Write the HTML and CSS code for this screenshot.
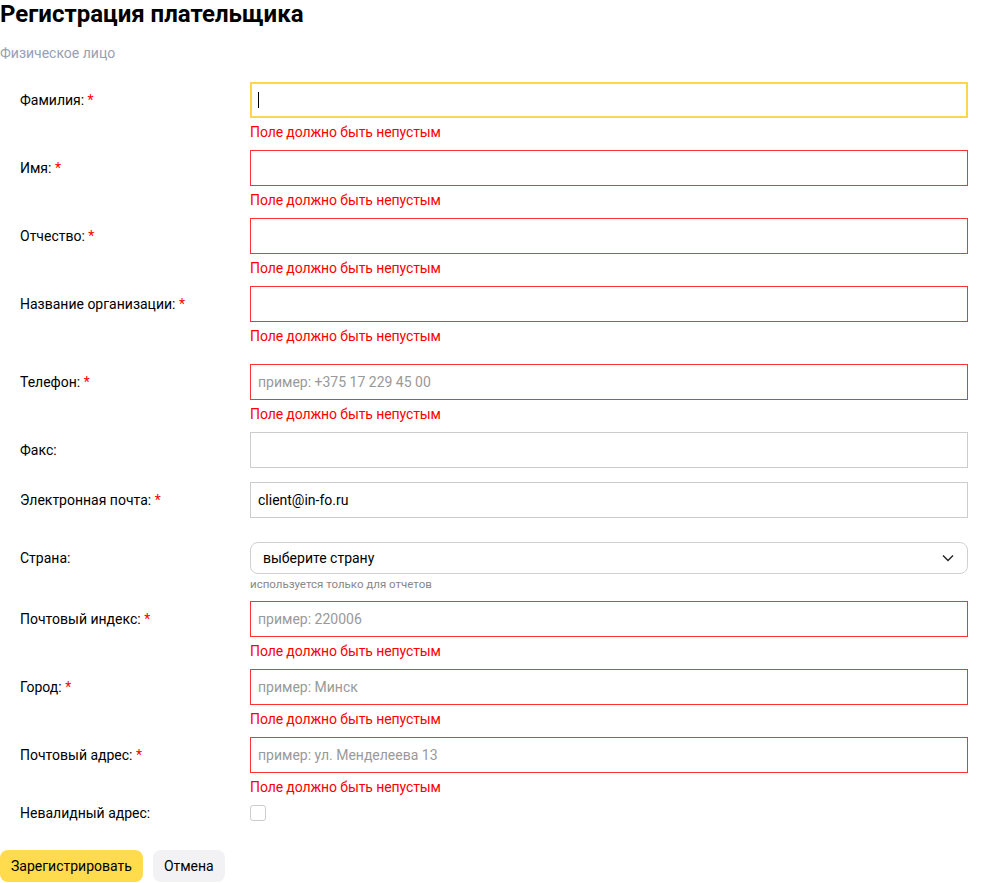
FILE: index.html
```html
<!DOCTYPE html>
<html lang="ru">
<head>
<meta charset="utf-8">
<title>Регистрация плательщика</title>
<link rel="stylesheet" href="styles.css">
</head>
<body>
<div class="page">
  <h1 class="title">Регистрация плательщика</h1>
  <div class="subtitle">Физическое лицо</div>

  <form class="form">
    <div class="row">
      <label class="label">Фамилия: <span class="req">*</span></label>
      <div class="field">
        <div class="input-wrap">
          <input class="input input-focus" type="text">
          <span class="caret"></span>
        </div>
        <div class="error">Поле должно быть непустым</div>
      </div>
    </div>

    <div class="row">
      <label class="label">Имя: <span class="req">*</span></label>
      <div class="field">
        <input class="input input-error" type="text">
        <div class="error">Поле должно быть непустым</div>
      </div>
    </div>

    <div class="row">
      <label class="label">Отчество: <span class="req">*</span></label>
      <div class="field">
        <input class="input input-error" type="text">
        <div class="error">Поле должно быть непустым</div>
      </div>
    </div>

    <div class="row row-wide">
      <label class="label">Название организации: <span class="req">*</span></label>
      <div class="field">
        <input class="input input-error" type="text">
        <div class="error">Поле должно быть непустым</div>
      </div>
    </div>

    <div class="row">
      <label class="label">Телефон: <span class="req">*</span></label>
      <div class="field">
        <input class="input input-error" type="text" placeholder="пример: +375 17 229 45 00">
        <div class="error">Поле должно быть непустым</div>
      </div>
    </div>

    <div class="row row-plain">
      <label class="label">Факс:</label>
      <div class="field">
        <input class="input" type="text">
      </div>
    </div>

    <div class="row row-plain row-before-select">
      <label class="label">Электронная почта: <span class="req">*</span></label>
      <div class="field">
        <input class="input" type="text" value="client@in-fo.ru">
      </div>
    </div>

    <div class="row row-select">
      <label class="label label-select">Страна:</label>
      <div class="field">
        <div class="select">
          <span>выберите страну</span>
          <svg class="chevron" width="12" height="8" viewBox="0 0 12 8"><path d="M1 1.5 L6 6.5 L11 1.5" fill="none" stroke="#222" stroke-width="1.4"/></svg>
        </div>
        <div class="hint">используется только для отчетов</div>
      </div>
    </div>

    <div class="row">
      <label class="label">Почтовый индекс: <span class="req">*</span></label>
      <div class="field">
        <input class="input input-error" type="text" placeholder="пример: 220006">
        <div class="error">Поле должно быть непустым</div>
      </div>
    </div>

    <div class="row">
      <label class="label">Город: <span class="req">*</span></label>
      <div class="field">
        <input class="input input-error" type="text" placeholder="пример: Минск">
        <div class="error">Поле должно быть непустым</div>
      </div>
    </div>

    <div class="row">
      <label class="label">Почтовый адрес: <span class="req">*</span></label>
      <div class="field">
        <input class="input input-error" type="text" placeholder="пример: ул. Менделеева 13">
        <div class="error">Поле должно быть непустым</div>
      </div>
    </div>

    <div class="row row-check">
      <label class="label label-check">Невалидный адрес:</label>
      <div class="field">
        <span class="checkbox"></span>
      </div>
    </div>

    <div class="actions">
      <button type="button" class="btn btn-primary">Зарегистрировать</button>
      <button type="button" class="btn btn-secondary">Отмена</button>
    </div>
  </form>
</div>
</body>
</html>
```

FILE: styles.css
```css
* { box-sizing: border-box; }

body {
  margin: 0;
  font-family: Roboto, "Liberation Sans", sans-serif;
  color: #000;
  background: #fff;
}

.page {
  width: 968px;
}

.title {
  margin: 0;
  font-size: 24px;
  line-height: 28px;
  font-weight: 700;
  color: #000;
}

.subtitle {
  margin-top: 16px;
  font-size: 14px;
  line-height: 18px;
  color: #97a0b4;
}

.form {
  margin-top: 20px;
}

.row {
  display: grid;
  grid-template-columns: 250px 1fr;
  margin-bottom: 9px;
}

.row-wide { margin-bottom: 19px; }
.row-plain { margin-bottom: 14px; }
.row-before-select { margin-bottom: 24px; }
.row-select { margin-bottom: 9px; }

.label {
  padding-left: 20px;
  font-size: 14px;
  line-height: 36px;
  color: #000;
}

.label-select { line-height: 32px; }
.label-check { line-height: 16px; }

.req { color: #f00; }

.field {
  display: flex;
  flex-direction: column;
  min-width: 0;
}

.input-wrap {
  position: relative;
}

.input {
  display: block;
  width: 100%;
  height: 36px;
  margin: 0;
  padding: 0 7px;
  border: 1px solid #ccc;
  border-radius: 0;
  font-family: inherit;
  font-size: 14px;
  color: #000;
  background: #fff;
  outline: none;
}

.input::placeholder { color: #999; }

.input-error { border-color: #f33; }

.input-focus {
  border: 2px solid #fdd54f;
}

.caret {
  position: absolute;
  left: 8px;
  top: 10px;
  width: 1px;
  height: 16px;
  background: #000;
}

.error {
  margin-top: 5px;
  font-size: 14px;
  line-height: 18px;
  letter-spacing: -0.1px;
  color: #f00;
}

.select {
  display: flex;
  align-items: center;
  justify-content: space-between;
  height: 32px;
  padding: 0 13px 0 12px;
  border: 1px solid #d0d0d0;
  border-radius: 8px;
  font-size: 14px;
  color: #000;
}

.chevron { display: block; }

.hint {
  margin-top: 2px;
  font-size: 11.5px;
  line-height: 16px;
  color: #888;
}

.row-check { margin-bottom: 29px; }

.checkbox {
  display: block;
  width: 16px;
  height: 16px;
  border: 1px solid #ccc;
  border-radius: 3px;
  background: #fff;
}

.actions {
  display: flex;
  gap: 10px;
}

.btn {
  height: 32px;
  padding: 0 11px;
  border: none;
  border-radius: 8px;
  font-family: inherit;
  font-size: 14px;
  color: #000;
  cursor: pointer;
}

.btn-primary { background: #ffdb4d; }
.btn-secondary { background: #f2f2f4; }
```
